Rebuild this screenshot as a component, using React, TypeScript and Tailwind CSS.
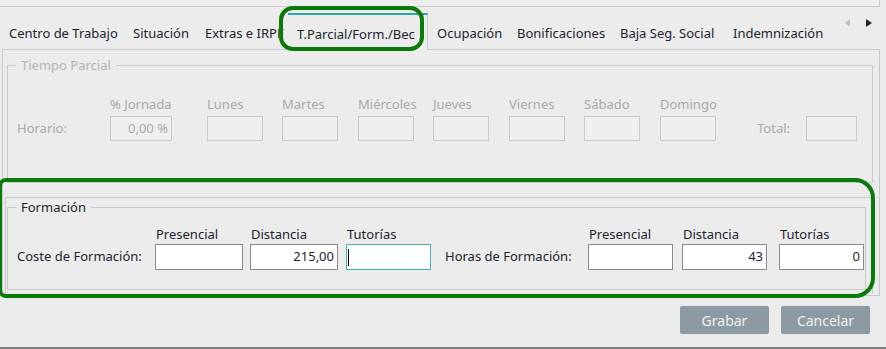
import React from "react";

const tabs = [
  { label: "Centro de Trabajo", w: "w-[124px]" },
  { label: "Situación", w: "w-[72px]" },
  { label: "Extras e IRPF", w: "w-[92px]" },
  { label: "T.Parcial/Form./Bec", w: "w-[140px]", active: true },
  { label: "Ocupación", w: "w-[80px]" },
  { label: "Bonificaciones", w: "w-[103px]" },
  { label: "Baja Seg. Social", w: "w-[113px]" },
  { label: "Indemnización", w: "w-[100px]" },
];

const days = [
  { label: "Lunes", ml: "ml-[35px]" },
  { label: "Martes", ml: "ml-[19px]" },
  { label: "Miércoles", ml: "ml-[20px]" },
  { label: "Jueves", ml: "ml-[19px]" },
  { label: "Viernes", ml: "ml-[20px]" },
  { label: "Sábado", ml: "ml-[19px]" },
  { label: "Domingo", ml: "ml-[20px]" },
];

const DisabledBox = ({ value = "", w = "w-[56px]" }: { value?: string; w?: string }) => (
  <div className={`${w} h-[25px] border border-[#c9c9c9] bg-[#efefef] flex items-center justify-end pr-[3px] text-[#a9a9a9]`}>
    {value}
  </div>
);

const Field = ({
  label,
  value = "",
  w,
  focused,
}: {
  label: string;
  value?: string;
  w: string;
  focused?: boolean;
}) => (
  <div className={`${w} flex flex-col`}>
    <span className="pl-px h-[16px] leading-[16px] whitespace-nowrap">{label}</span>
    <div
      className={`mt-[2px] h-[26px] bg-white flex items-center justify-end pr-[3px] ${
        focused ? "border border-[#3fb3b3] justify-start pl-px" : "border border-[#8a8a8a]"
      }`}
    >
      {focused ? <span className="w-px h-[17px] bg-black" /> : value}
    </div>
  </div>
);

export default function App() {
  return (
    <div
      className="relative w-[886px] h-[349px] overflow-hidden bg-[#ececec] text-[13px] text-[#1e2230] flex flex-col"
      style={{ fontFamily: '"Noto Sans", "Open Sans", sans-serif' }}
    >
      {/* top strip */}
      <div className="w-[880px] h-[7px] border-b border-r border-[#c5cbce] bg-[#eeeeee]" />

      {/* tab bar */}
      <div className="h-[42px] flex items-end relative z-10">
        {tabs.map((t) =>
          t.active ? (
            <div
              key={t.label}
              className={`${t.w} h-[37px] -mb-px pt-[5px] px-[9px] flex items-center whitespace-nowrap bg-[#ececec] border-t-2 border-t-[#2ea6a6] border-r border-r-[#c5cbce]`}
            >
              {t.label}
            </div>
          ) : (
            <div
              key={t.label}
              className={`${t.w} h-[36px] pt-[6px] px-[9px] flex items-center whitespace-nowrap overflow-hidden`}
            >
              {t.label}
            </div>
          )
        )}
        <div className="ml-auto mr-[14px] self-start mt-[12px] flex gap-[15px]">
          <svg width="6" height="8" viewBox="0 0 6 8">
            <path d="M5 0 L0 4 L5 8 Z" fill="#c2c2c2" />
          </svg>
          <svg width="6" height="8" viewBox="0 0 6 8">
            <path d="M0 0 L6 4 L0 8 Z" fill="#222" />
          </svg>
        </div>
      </div>

      {/* tab panel */}
      <div className="ml-[2px] w-[878px] h-[247px] border border-[#c5cbce] flex flex-col">
        <fieldset className="mt-[8px] ml-[4px] mr-[6px] h-[125px] border border-[#c5cbce] text-[#a9a9a9]">
          <legend className="ml-[8px] px-[5px] leading-[14px] text-[#b4b4b4]">Tiempo Parcial</legend>
          <div className="pt-[24px] pl-[9px] flex items-end">
            <div className="w-[93px] h-[25px] flex items-center">Horario:</div>
            <div className="w-[62px] flex flex-col">
              <span className="h-[16px] leading-[16px] whitespace-nowrap">% Jornada</span>
              <div className="mt-[4px]">
                <DisabledBox value="0,00 %" w="w-[62px]" />
              </div>
            </div>
            {days.map((d) => (
              <div key={d.label} className={`${d.ml} w-[56px] flex flex-col`}>
                <span className="h-[16px] leading-[16px] whitespace-nowrap">{d.label}</span>
                <div className="mt-[4px]">
                  <DisabledBox />
                </div>
              </div>
            ))}
            <div className="ml-[41px] w-[49px] h-[24px] flex items-center">Total:</div>
            <DisabledBox w="w-[51px]" />
          </div>
        </fieldset>

        <div className="mt-[14px] ml-[2px] mr-[6px] h-[97px] border border-[#c5cbce] border-b-0">
          <fieldset className="mt-[2px] ml-px mr-[6px] h-[90px] border border-[#c5cbce]">
            <legend className="ml-[8px] px-[5px] leading-[14px]">Formación</legend>
            <div className="pt-[12px] pl-[9px] flex items-end">
              <div className="w-[138px] h-[26px] flex items-center whitespace-nowrap">Coste de Formación:</div>
              <Field label="Presencial" w="w-[88px]" />
              <div className="ml-[7px]">
                <Field label="Distancia" value="215,00" w="w-[88px]" />
              </div>
              <div className="ml-[8px]">
                <Field label="Tutorías" w="w-[85px]" focused />
              </div>
              <div className="ml-[14px] w-[143px] h-[26px] flex items-center whitespace-nowrap">Horas de Formación:</div>
              <Field label="Presencial" w="w-[85px]" />
              <div className="ml-[9px]">
                <Field label="Distancia" value="43" w="w-[85px]" />
              </div>
              <div className="ml-[12px]">
                <Field label="Tutorías" value="0" w="w-[85px]" />
              </div>
            </div>
          </fieldset>
        </div>
      </div>

      {/* buttons */}
      <div className="pt-[10px] pr-[16px] flex justify-end gap-[12px]">
        <button className="w-[89px] h-[28px] rounded-[2px] bg-[#8c9ba1] text-[#eef2f3] text-[14px]">Grabar</button>
        <button className="w-[89px] h-[28px] rounded-[2px] bg-[#8c9ba1] text-[#eef2f3] text-[14px]">Cancelar</button>
      </div>
      <div className="flex-1" />
      <div className="h-[2px] bg-[#7d7d7d]" />

      {/* green annotation marks */}
      <div className="absolute left-[279px] top-[6px] w-[145px] h-[45px] border-4 border-[#0b7a0b] rounded-[14px] z-20" />
      <div className="absolute left-[-2px] top-[178px] w-[877px] h-[120px] border-[4px] border-[#0b7a0b] rounded-l-[8px] rounded-r-[20px] z-20" />
    </div>
  );
}
